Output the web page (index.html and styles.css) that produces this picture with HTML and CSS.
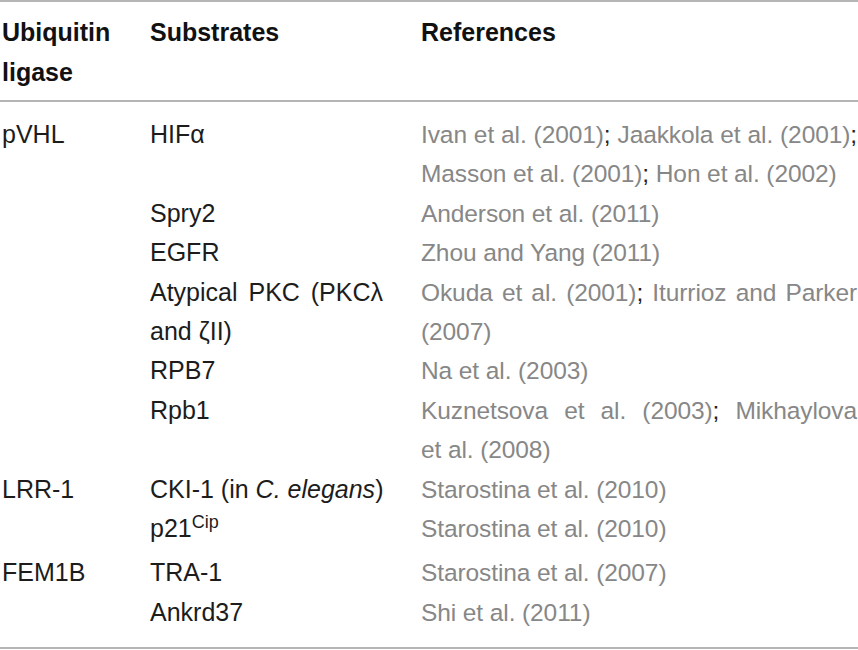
FILE: index.html
```html
<!DOCTYPE html>
<html>
<head>
<meta charset="utf-8">
<link rel="stylesheet" href="styles.css">
</head>
<body>
<table class="tbl">
  <colgroup>
    <col class="c1"><col class="c2"><col class="c3">
  </colgroup>
  <thead>
    <tr>
      <th class="col-lig">Ubiquitin ligase</th>
      <th class="col-sub">Substrates</th>
      <th class="col-ref">References</th>
    </tr>
  </thead>
  <tbody>
    <tr class="first">
      <td class="col-lig">pVHL</td>
      <td class="col-sub">HIFα</td>
      <td class="col-ref">Ivan et&nbsp;al. (2001)<span class="semi">;</span> Jaakkola et&nbsp;al. (2001)<span class="semi">;</span> Masson et&nbsp;al. (2001)<span class="semi">;</span> Hon et&nbsp;al. (2002)</td>
    </tr>
    <tr>
      <td class="col-lig"></td>
      <td class="col-sub">Spry2</td>
      <td class="col-ref">Anderson et&nbsp;al. (2011)</td>
    </tr>
    <tr>
      <td class="col-lig"></td>
      <td class="col-sub">EGFR</td>
      <td class="col-ref">Zhou and Yang (2011)</td>
    </tr>
    <tr>
      <td class="col-lig"></td>
      <td class="col-sub">Atypical PKC (PKCλ and ζII)</td>
      <td class="col-ref">Okuda et&nbsp;al. (2001)<span class="semi">;</span> Iturrioz and Parker (2007)</td>
    </tr>
    <tr>
      <td class="col-lig"></td>
      <td class="col-sub">RPB7</td>
      <td class="col-ref">Na et&nbsp;al. (2003)</td>
    </tr>
    <tr>
      <td class="col-lig"></td>
      <td class="col-sub">Rpb1</td>
      <td class="col-ref">Kuznetsova et&nbsp;al. (2003)<span class="semi">;</span> Mikhaylova et&nbsp;al. (2008)</td>
    </tr>
    <tr>
      <td class="col-lig">LRR-1</td>
      <td class="col-sub nowrap">CKI-1 (in <i>C. elegans</i>)</td>
      <td class="col-ref">Starostina et&nbsp;al. (2010)</td>
    </tr>
    <tr class="sup-row">
      <td class="col-lig"></td>
      <td class="col-sub">p21<sup class="sup">Cip</sup></td>
      <td class="col-ref">Starostina et&nbsp;al. (2010)</td>
    </tr>
    <tr>
      <td class="col-lig">FEM1B</td>
      <td class="col-sub">TRA-1</td>
      <td class="col-ref">Starostina et&nbsp;al. (2007)</td>
    </tr>
    <tr class="last">
      <td class="col-lig"></td>
      <td class="col-sub">Ankrd37</td>
      <td class="col-ref">Shi et&nbsp;al. (2011)</td>
    </tr>
  </tbody>
</table>
</body>
</html>
```
FILE: styles.css
```css
html, body {
  margin: 0;
  padding: 0;
  background: #ffffff;
}

.tbl {
  width: 858px;
  border-collapse: collapse;
  table-layout: fixed;
  font-family: "Liberation Sans", Arial, sans-serif;
  font-size: 25px;
  color: #1c1c1c;
  border-top: 2px solid #b5b5b5;
  border-bottom: 2px solid #b5b5b5;
}

.c1 { width: 150px; }
.c2 { width: 271px; }
.c3 { width: 437px; }

th, td {
  padding: 0;
  vertical-align: top;
  text-align: justify;
}

th {
  font-weight: bold;
  color: #111111;
  line-height: 40px;
  padding-top: 10px;
  padding-bottom: 8px;
  border-bottom: 2px solid #b5b5b5;
  text-align: left;
}

td {
  line-height: 39.4px;
}

.col-lig {
  padding-left: 2px;
}

.col-sub {
  padding-right: 38px;
}

td.col-ref {
  padding-right: 1px;
  color: #878787;
  font-size: 24.5px;
  letter-spacing: -0.1px;
}

.semi {
  color: #222222;
}

.nowrap {
  white-space: nowrap;
}

.first td {
  padding-top: 13px;
}

.sup-row td {
  padding-bottom: 5px;
}

.last td {
  padding-bottom: 15px;
}

.sup {
  font-size: 18px;
  line-height: 0;
  vertical-align: 9px;
}
```
